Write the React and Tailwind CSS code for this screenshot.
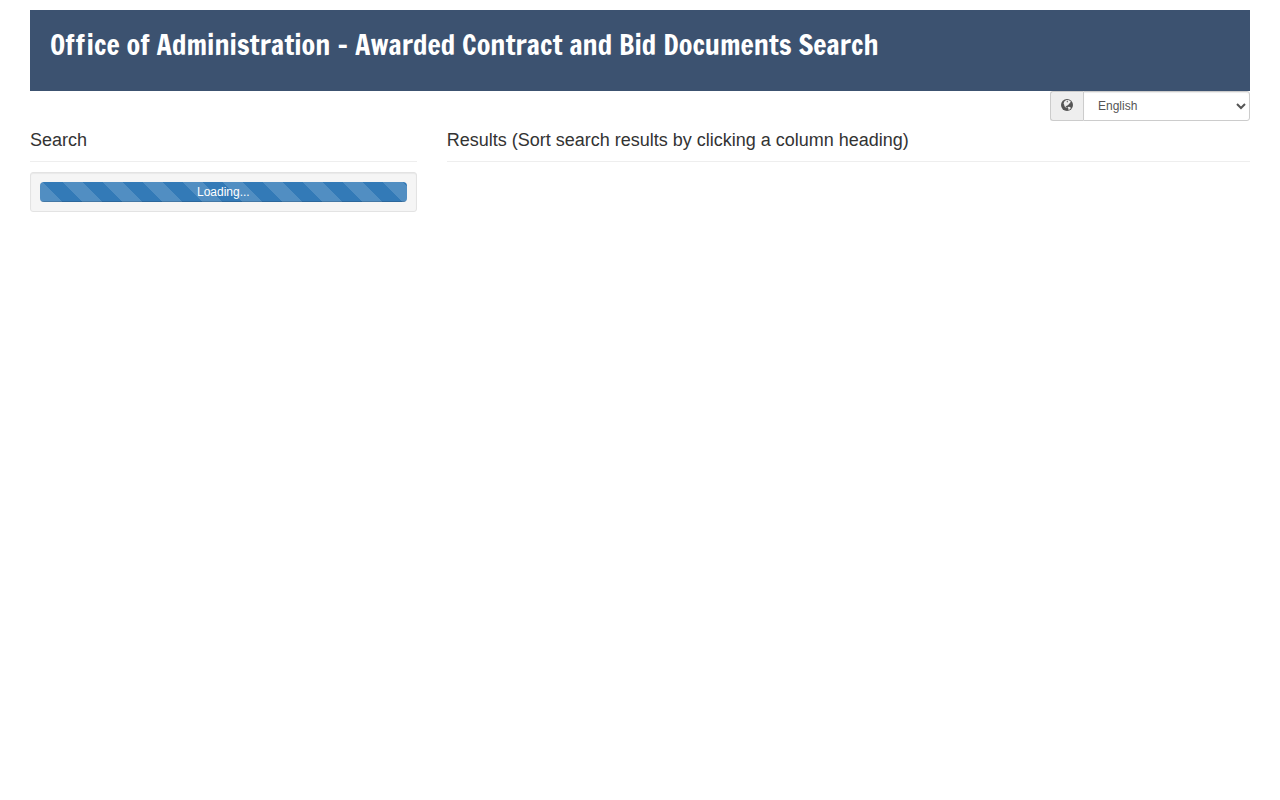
const languages = ['English', 'Español', 'Français', 'Deutsch'];

const GlobeIcon = () => (
  <svg className="w-3 h-3" viewBox="0 0 24 24" role="img" aria-label="Language">
    <circle cx="12" cy="12" r="12" fill="#555555" />
    <path
      fill="#eeeeee"
      d="M7.5 4l3.4-2 2.6.4 1.5-.5 3.4 2 1.6 2.2-1.8.4.4 1.8-2.4.6-.6 2.2-2.2.8-1.2 2-2.4-.4-.4 1.8 1.8.6.2 1.6-1.8-.4-2.6-2.8-.6-3-1.2-2.4 1-3z"
    />
    <path fill="#eeeeee" d="M13.6 15.8l2.8-.4 3 1.6.2 1.4-3 3-1.6.4-.2-2.6-1.4-1.4z" />
    <path fill="#555555" d="M11 4.8l2.2-.8 1 1.4-2 1.4z" />
  </svg>
);

const SectionHeading = ({ children }) => (
  <h2 className="text-lg leading-5 font-normal pb-[11px] mb-2.5 border-b border-[#eeeeee]">
    {children}
  </h2>
);

const LoadingBar = () => (
  <div className="h-5 rounded bg-[#f5f5f5] overflow-hidden">
    <div
      role="progressbar"
      aria-label="Loading"
      className="h-5 w-full text-xs leading-5 text-center text-white bg-[#337ab7] bg-[linear-gradient(45deg,rgba(255,255,255,0.15)_25%,transparent_25%,transparent_50%,rgba(255,255,255,0.15)_50%,rgba(255,255,255,0.15)_75%,transparent_75%,transparent)] bg-[length:40px_40px] bg-[position:23px_0px] shadow-[inset_0_-1px_0_rgba(0,0,0,0.15)]"
    >
      Loading...
    </div>
  </div>
);

const App = () => {
  return (
    <div className="px-[30px] pt-2.5 text-[#333333] font-['Liberation_Sans',Arial,sans-serif]">
      {/* Page Header */}
      <header className="bg-[#3c5270] px-5 pt-[18px] pb-[30px]">
        <h1 className="text-[28px] leading-[33px] font-medium text-white font-['Francois_One','Liberation_Sans_Narrow','Liberation_Sans',sans-serif]">
          Office of Administration - Awarded Contract and Bid Documents Search
        </h1>
      </header>

      {/* Language Picker */}
      <div className="flex justify-end">
        <div className="flex w-[200px] h-[30px]">
          <label
            htmlFor="language"
            className="flex items-center px-2.5 pb-0.5 bg-[#eeeeee] border border-r-0 border-[#cccccc] rounded-l-[3px]"
          >
            <GlobeIcon />
          </label>
          <select
            id="language"
            defaultValue="English"
            className="flex-1 min-w-0 px-2.5 text-xs text-[#555555] bg-white border border-[#cccccc] rounded-r-[3px] shadow-[inset_0_1px_1px_rgba(0,0,0,0.075)]"
          >
            {languages.map(language => (
              <option key={language}>{language}</option>
            ))}
          </select>
        </div>
      </div>

      {/* Search and Results */}
      <main className="grid grid-cols-12 gap-x-[30px] pt-[9px]">
        <section className="col-span-4">
          <SectionHeading>Search</SectionHeading>
          <div className="p-[9px] bg-[#f5f5f5] border border-[#e3e3e3] rounded-[3px] shadow-[inset_0_1px_1px_rgba(0,0,0,0.05)]">
            <LoadingBar />
          </div>
        </section>
        <section className="col-span-8">
          <SectionHeading>Results (Sort search results by clicking a column heading)</SectionHeading>
        </section>
      </main>
    </div>
  );
};

export default App;
